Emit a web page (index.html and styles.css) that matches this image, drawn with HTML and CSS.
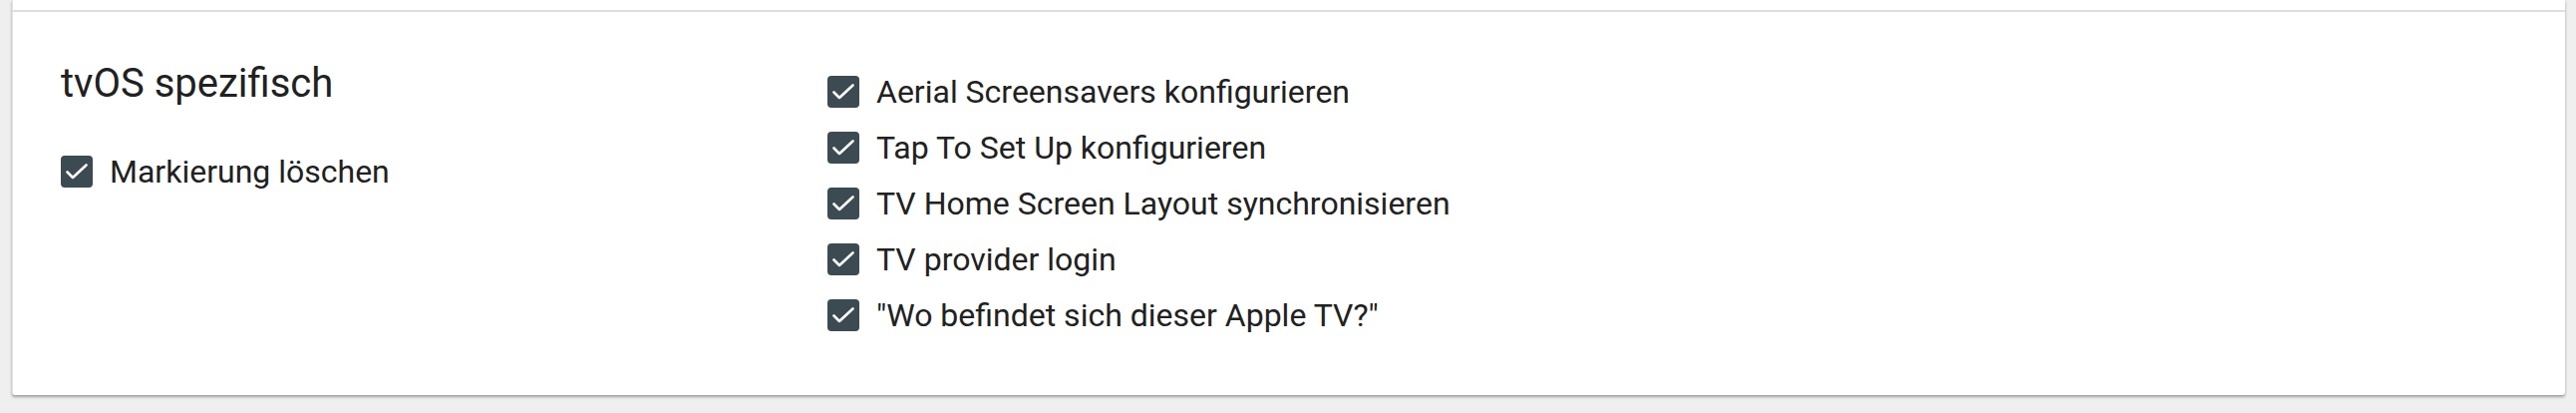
FILE: index.html
```html
<!DOCTYPE html>
<html lang="de">
<head>
  <meta charset="UTF-8" />
  <meta name="viewport" content="width=device-width, initial-scale=1.0" />
  <title>tvOS Einstellungen</title>
  <link rel="stylesheet" href="styles.css">
</head>
<body>

  <div class="card">
    <div class="card-top"></div>

    <!-- tvOS Abschnitt -->
    <section class="section">
      <div class="col">
        <h2>tvOS spezifisch</h2>
        <label class="check">
          <span class="box"><svg viewBox="0 0 32 32"><polyline points="6.5,16.5 12,22 25.5,9.5" /></svg></span>
          Markierung löschen
        </label>
      </div>

      <div class="col list">
        <label class="check">
          <span class="box"><svg viewBox="0 0 32 32"><polyline points="6.5,16.5 12,22 25.5,9.5" /></svg></span>
          Aerial Screensavers konfigurieren
        </label>
        <label class="check">
          <span class="box"><svg viewBox="0 0 32 32"><polyline points="6.5,16.5 12,22 25.5,9.5" /></svg></span>
          Tap To Set Up konfigurieren
        </label>
        <label class="check">
          <span class="box"><svg viewBox="0 0 32 32"><polyline points="6.5,16.5 12,22 25.5,9.5" /></svg></span>
          TV Home Screen Layout synchronisieren
        </label>
        <label class="check">
          <span class="box"><svg viewBox="0 0 32 32"><polyline points="6.5,16.5 12,22 25.5,9.5" /></svg></span>
          TV provider login
        </label>
        <label class="check">
          <span class="box"><svg viewBox="0 0 32 32"><polyline points="6.5,16.5 12,22 25.5,9.5" /></svg></span>
          "Wo befindet sich dieser Apple TV?"
        </label>
      </div>
    </section>
  </div>

</body>
</html>
```

FILE: styles.css
```css
:root {
  --page-bg: #efefef;
  --card-bg: #ffffff;
  --text-color: #212121;
  --check-bg: #3c4a51;
  --divider: #dddddd;
}

body {
  margin: 0;
  background: var(--page-bg);
  color: var(--text-color);
  font-family: Roboto, "Noto Sans", sans-serif;
  height: 414px;
  overflow: hidden;
}

.card {
  margin: 0 11px 0 12px;
  background: var(--card-bg);
  border-left: 1px solid #e2e2e2;
  border-radius: 0 0 3px 3px;
  box-shadow: 0 2px 3px rgba(0, 0, 0, 0.35);
}

.card-top {
  height: 10px;
  border-bottom: 2px solid var(--divider);
}

.section {
  display: grid;
  grid-template-columns: 769px 1fr;
  padding: 64px 48px 64px 48px;
}

.col {
  display: flex;
  flex-direction: column;
}

h2 {
  margin: -15px 0 0 0;
  font-size: 40px;
  font-weight: 400;
  line-height: 46px;
  height: 95px;
}

.list {
  gap: 24px;
}

.check {
  display: flex;
  align-items: center;
  gap: 17px;
  height: 32px;
  font-size: 32px;
  white-space: nowrap;
}

.box {
  flex: none;
  width: 32px;
  height: 32px;
  border-radius: 4px;
  background: var(--check-bg);
  display: flex;
}

.box svg {
  width: 32px;
  height: 32px;
  fill: none;
  stroke: #ffffff;
  stroke-width: 2.6;
  stroke-linecap: round;
  stroke-linejoin: round;
}
```
